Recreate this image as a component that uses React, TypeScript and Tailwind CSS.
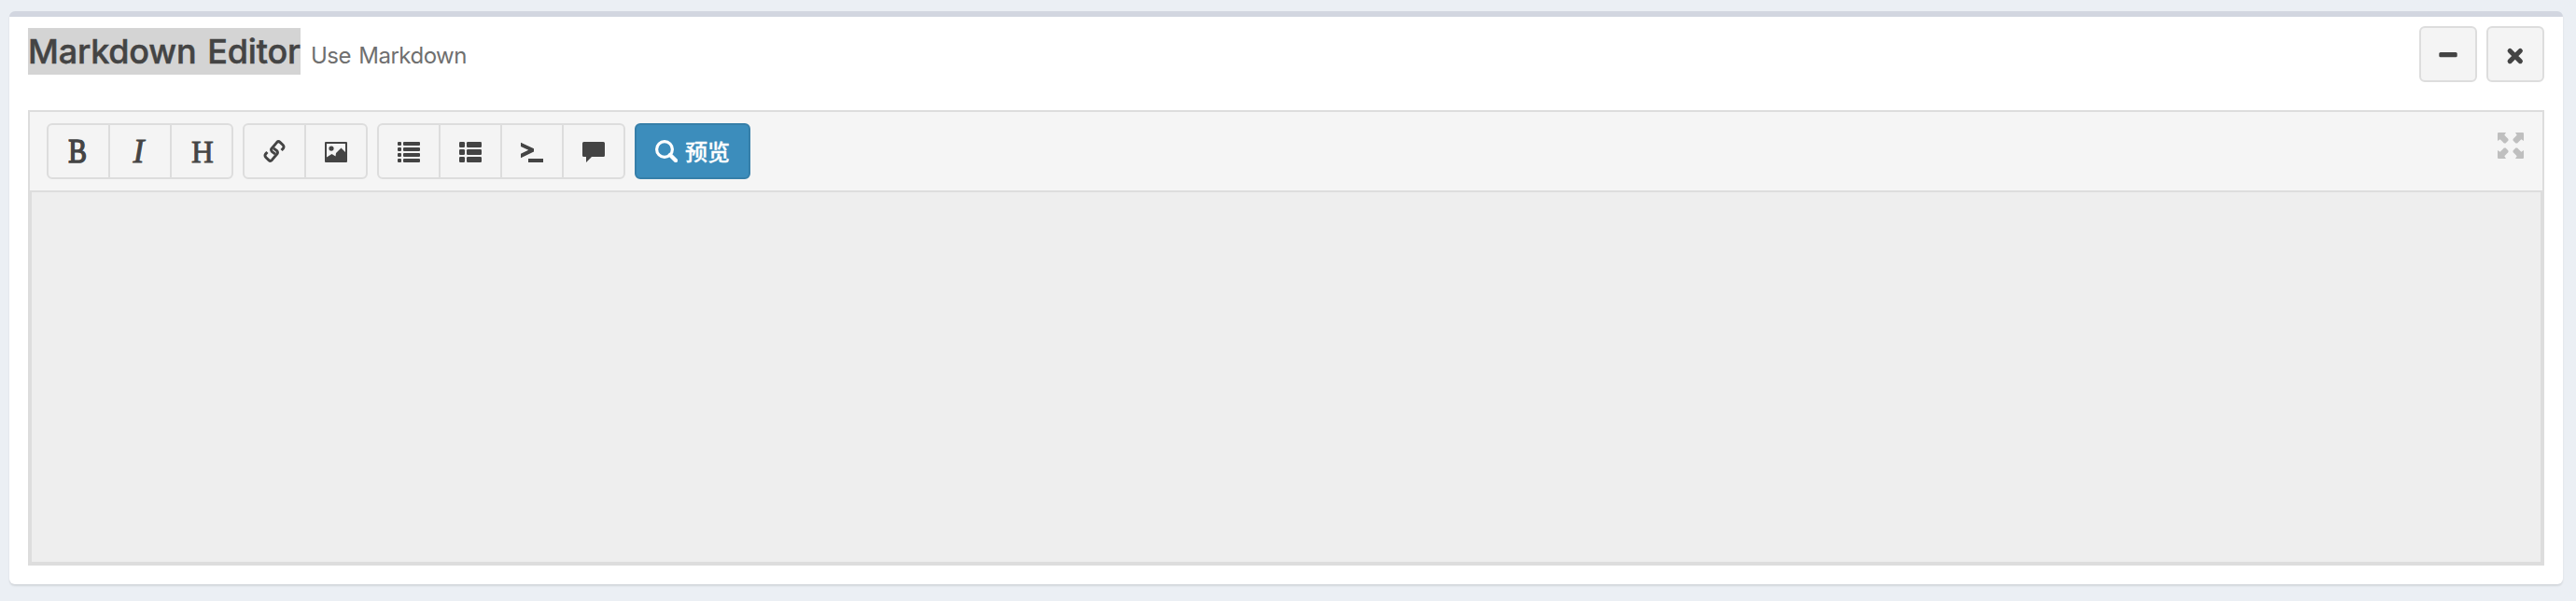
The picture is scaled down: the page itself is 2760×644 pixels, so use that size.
import type { ReactNode } from "react";

function Icon({ children }: { children: ReactNode }) {
  return (
    <svg className="block h-6 w-6 shrink-0" viewBox="0 0 24 24" fill="currentColor" aria-hidden="true">
      {children}
    </svg>
  );
}

function Cell({ label, children }: { label: string; children: ReactNode }) {
  return (
    <button type="button" aria-label={label} className="box-content flex w-16 items-center justify-center">
      {children}
    </button>
  );
}

function Group({ children }: { children: ReactNode }) {
  return (
    <div className="flex h-[60px] divide-x-2 divide-[#ddd] overflow-hidden rounded-[6px] border-2 border-[#ddd] bg-[#f4f4f4]">
      {children}
    </div>
  );
}

const bulletRows = [2, 8, 14, 20];
const blockRows = [2, 10, 18];

export default function App() {
  return (
    <div className="h-[644px] w-[2760px] bg-[#ebeff4] pt-3 pl-[10px] font-['Inter','Noto_Sans_CJK_SC',sans-serif] text-[#444]">
      <section className="h-[614px] w-[2736px] rounded-[6px] border-t-[6px] border-[#d2d6e0] bg-white shadow-[0_2px_2px_rgba(0,0,0,0.1)]">
        <header className="flex h-[100px] justify-between px-5">
          <h3 className="flex pt-3">
            <span className="h-[50px] w-[292px] bg-[#d4d4d4] text-[36px] leading-[50px] font-medium tracking-[-0.2px] whitespace-nowrap [word-spacing:2.5px] [-webkit-text-stroke:0.5px_#444]">
              Markdown Editor
            </span>
            <small className="pt-[5px] pl-[11px] text-[24px] leading-[50px] tracking-[-0.5px] whitespace-nowrap text-[#6f6f6f] [word-spacing:2px]">Use Markdown</small>
          </h3>
          <div className="flex gap-[10px] pt-[10px]">
            <button type="button" aria-label="Collapse" className="flex h-[60px] w-[62px] items-center justify-center rounded-[6px] border-2 border-[#ddd] bg-[#f4f4f4]">
              <Icon>
                <rect x="2.3" y="10" width="19.4" height="5.3" rx="1.5" />
              </Icon>
            </button>
            <button type="button" aria-label="Remove" className="flex h-[60px] w-[62px] items-center justify-center rounded-[6px] border-2 border-[#ddd] bg-[#f4f4f4]">
              <Icon>
                <path d="M6.2 8.7 17.3 19.8M17.3 8.7 6.2 19.8" transform="translate(0 -0.2)" stroke="currentColor" strokeWidth="5.2" strokeLinecap="round" />
              </Icon>
            </button>
          </div>
        </header>

        <div className="mx-5 h-[488px] border-2 border-[#ddd] bg-[#eee]">
          <div className="flex h-[84px] justify-between bg-[#f5f5f5] pt-3 pr-5 pl-[18px]">
            <div className="flex gap-[10px]">
              <Group>
                <Cell label="Bold">
                  <span className="inline-block scale-x-[0.82] pr-0.5 font-['Liberation_Serif',serif] text-[36px] leading-[36px] [-webkit-text-stroke:1.6px_#444]">B</span>
                </Cell>
                <Cell label="Italic">
                  <span className="inline-block pr-[3px] font-['Liberation_Serif',serif] text-[36px] leading-[36px] italic [-webkit-text-stroke:0.8px_#444]">I</span>
                </Cell>
                <Cell label="Heading">
                  <span className="inline-block pt-px pl-0.5 font-['Liberation_Serif',serif] text-[33px] leading-[36px] [-webkit-text-stroke:0.8px_#444]">H</span>
                </Cell>
              </Group>
              <Group>
                <Cell label="Link">
                  <Icon>
                    <g fill="none" stroke="currentColor" strokeWidth="2.9">
                      <path d="M13 15.2 9.6 12.6Q7.8 10.8 9 9.2L14.6 2.6Q16.3 0.8 18 2.4L21 5.2Q22.7 7 21.6 8.8L19.6 11" />
                      <path d="M11 8.8 14.4 11.4Q16.2 13.2 15 14.8L9.4 21.4Q7.7 23.2 6 21.6L3 18.8Q1.3 17 2.4 15.2L4.4 13" />
                    </g>
                  </Icon>
                </Cell>
                <Cell label="Image">
                  <Icon>
                    <path fillRule="evenodd" d="M1 2H23Q24 2 24 3V23Q24 24 23 24H1Q0 24 0 23V3Q0 2 1 2ZM2 4V18.5L7.5 15 11.5 17.5 12 14 17.5 8.5 22 13V4ZM7 6.5A2.6 2.6 0 1 1 7 11.7A2.6 2.6 0 1 1 7 6.5Z" />
                  </Icon>
                </Cell>
              </Group>
              <Group>
                <Cell label="Unordered list">
                  <Icon>
                    {bulletRows.map((y) => (
                      <g key={y}>
                        <rect x="0" y={y} width="4" height="4" rx="1" />
                        <rect x="6" y={y} width="18" height="4" rx="1" />
                      </g>
                    ))}
                  </Icon>
                </Cell>
                <Cell label="Ordered list">
                  <Icon>
                    {blockRows.map((y) => (
                      <g key={y}>
                        <rect x="0" y={y} width="6" height="6" rx="1.2" />
                        <rect x="8" y={y} width="16" height="6" rx="1.2" />
                      </g>
                    ))}
                  </Icon>
                </Cell>
                <Cell label="Code">
                  <Icon>
                    <path d="M0 2.7 14 9.2V12.4L0 19.2V14.8L8.2 10.8 0 7ZM8 20H24V24H8Z" />
                  </Icon>
                </Cell>
                <Cell label="Quote">
                  <Icon>
                    <path d="M1.5 2H22.5Q24 2 24 3.5V16.5Q24 18 22.5 18H10L4 24V18H1.5Q0 18 0 16.5V3.5Q0 2 1.5 2Z" />
                  </Icon>
                </Cell>
              </Group>
              <button type="button" className="flex h-[60px] w-[124px] items-center gap-2 rounded-[6px] border-2 border-[#367fa9] bg-[#3c8dbc] pl-5 text-white">
                <Icon>
                  <circle cx="10" cy="10" r="8.4" fill="none" stroke="currentColor" strokeWidth="3.2" />
                  <path d="M16 16 22 22" stroke="currentColor" strokeWidth="4.4" strokeLinecap="round" />
                </Icon>
                <span className="pb-px font-['Noto_Sans_CJK_SC',sans-serif] text-[24px] leading-[34px] font-medium whitespace-nowrap [-webkit-text-stroke:0.3px_#fff]">预览</span>
              </button>
            </div>
            <button type="button" aria-label="Fullscreen" className="flex h-7 w-7 pt-[10px] text-[#bfbfbf]">
              <svg className="h-7 w-7 shrink-0" viewBox="0 0 28 28" fill="currentColor" aria-hidden="true">
                <path id="corner" d="M1 0H9L7.3 2.7 11.5 6.9V8.6L8.6 11.5H6.9L2.7 7.3 0 9V1Q0 0 1 0Z" />
                <use href="#corner" transform="translate(28 0) scale(-1 1)" />
                <use href="#corner" transform="translate(0 28) scale(1 -1)" />
                <use href="#corner" transform="translate(28 28) scale(-1 -1)" />
              </svg>
            </button>
          </div>
          <textarea aria-label="Markdown" className="block h-[400px] w-full resize-none border-2 border-[#ddd] bg-[#eee] outline-none" />
        </div>
      </section>
    </div>
  );
}
